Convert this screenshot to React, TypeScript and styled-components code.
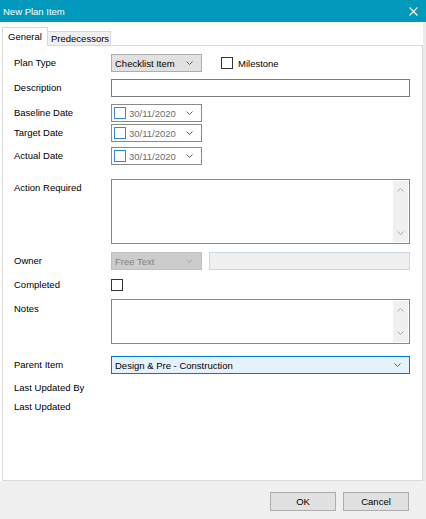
import React from 'react'
import styled, { createGlobalStyle } from 'styled-components'

const GlobalStyle = createGlobalStyle`
  html, body {
    margin: 0;
    padding: 0;
    background: #ffffff;
  }
  * {
    box-sizing: border-box;
  }
`

const Window = styled.div`
  width: 426px;
  height: 519px;
  display: flex;
  flex-direction: column;
  background: #ffffff;
  font-family: 'Liberation Sans', Arial, sans-serif;
  font-size: 9.5px;
  color: #000;
  overflow: hidden;
`

const TitleBar = styled.div`
  height: 22px;
  flex-shrink: 0;
  background: #0099bc;
  color: #fff;
  display: flex;
  align-items: center;
  justify-content: space-between;
  padding: 0 8px 0 3px;
  font-size: 9.5px;
`

const Content = styled.div`
  flex: 1;
  display: flex;
  flex-direction: column;
  padding: 5px 0 0 2px;
  border-right: 3px solid #ebebeb;
`

const TabStrip = styled.div`
  display: flex;
  align-items: flex-end;
  height: 19px;
  margin-bottom: -1px;
  position: relative;
  z-index: 1;
`

const Tab = styled.div<{ $active?: boolean; $width: number }>`
  width: ${p => p.$width}px;
  height: ${p => (p.$active ? 19 : 15)}px;
  background: ${p => (p.$active ? '#ffffff' : '#f0f0f0')};
  border: 1px solid #d9d9d9;
  border-bottom: ${p => (p.$active ? 'none' : '1px solid #d9d9d9')};
  border-left: ${p => (p.$active ? '1px solid #d9d9d9' : 'none')};
  display: flex;
  align-items: ${p => (p.$active ? 'flex-start' : 'center')};
  padding: ${p => (p.$active ? '3px 0 0 5px' : '0 0 0 3px')};
`

const Panel = styled.div`
  flex: 1;
  border: 1px solid #d9d9d9;
  background: #fff;
  padding: 0 0 0 11px;
  display: flex;
  flex-direction: column;
`

const Row = styled.div<{ $top: number; $align?: 'center' | 'start' }>`
  display: grid;
  grid-template-columns: 97px auto;
  align-items: ${p => (p.$align === 'start' ? 'start' : 'center')};
  margin-top: ${p => p.$top}px;
`

const Label = styled.div<{ $pad?: number }>`
  line-height: 12px;
  padding-top: ${p => p.$pad ?? 0}px;
  white-space: nowrap;
`

const Controls = styled.div`
  display: flex;
  align-items: center;
`

const Select = styled.div<{ $width: number; $variant?: 'normal' | 'disabled' | 'focused' }>`
  width: ${p => p.$width}px;
  height: 18px;
  display: flex;
  align-items: center;
  justify-content: space-between;
  padding: 0 8px 0 3px;
  background: ${p =>
    p.$variant === 'disabled' ? '#cccccc' : p.$variant === 'focused' ? '#e5f1fb' : '#e1e1e1'};
  border: 1px solid
    ${p => (p.$variant === 'disabled' ? '#bfbfbf' : p.$variant === 'focused' ? '#0078d7' : '#adadad')};
  color: ${p => (p.$variant === 'disabled' ? '#838383' : '#000')};
`

const TextInput = styled.div<{ $width: number; $disabled?: boolean }>`
  width: ${p => p.$width}px;
  height: 18px;
  background: ${p => (p.$disabled ? '#f0f0f0' : '#fff')};
  border: 1px solid ${p => (p.$disabled ? '#c9d6e8' : '#7a7a7a')};
  margin-left: ${p => (p.$disabled ? 7 : 0)}px;
`

const DateBox = styled.div`
  width: 91px;
  height: 18px;
  display: flex;
  align-items: center;
  padding: 0 8px 0 2px;
  border: 1px solid #8a8a8a;
  background: #fff;
  color: #6d6d6d;
`

const DateCheck = styled.span`
  width: 12px;
  height: 12px;
  border: 1px solid #3a86d4;
  background: #fff;
  margin-right: 3px;
  flex-shrink: 0;
`

const DateText = styled.span`
  flex: 1;
`

const CheckBox = styled.span<{ $gap?: number }>`
  width: 12px;
  height: 12px;
  border: 1px solid #333333;
  background: #fff;
  margin-left: ${p => p.$gap ?? 0}px;
  margin-right: 5px;
  flex-shrink: 0;
`

const TextArea = styled.div<{ $height: number }>`
  width: 299px;
  height: ${p => p.$height}px;
  border: 1px solid #828790;
  background: #fff;
  display: flex;
  justify-content: flex-end;
  padding: 1px;
`

const ScrollBar = styled.div`
  width: 15px;
  background: #f0f0f0;
  display: flex;
  flex-direction: column;
  justify-content: space-between;
  align-items: center;
  padding: 7px 0;
`

const Footer = styled.div`
  height: 38px;
  flex-shrink: 0;
  background: #f0f0f0;
  display: flex;
  justify-content: flex-end;
  align-items: flex-start;
  gap: 7px;
  padding: 11px 17px 0 0;
`

const Button = styled.button`
  width: 66px;
  height: 19px;
  background: #e1e1e1;
  border: 1px solid #adadad;
  font-family: 'Liberation Sans', Arial, sans-serif;
  font-size: 9.5px;
  color: #000;
  padding: 0;
`

const Chevron: React.FC<{ color?: string; up?: boolean }> = ({ color = '#606060', up }) => (
  <svg width="7" height="4" viewBox="0 0 7 4">
    <path
      d={up ? 'M0.5 3.5 L3.5 0.5 L6.5 3.5' : 'M0.5 0.5 L3.5 3.5 L6.5 0.5'}
      fill="none"
      stroke={color}
      strokeWidth="1"
    />
  </svg>
)

const CloseIcon = () => (
  <svg width="9" height="9" viewBox="0 0 9 9">
    <path d="M0.5 0.5 L8.5 8.5 M8.5 0.5 L0.5 8.5" stroke="#fff" strokeWidth="1.1" />
  </svg>
)

const Scroll = () => (
  <ScrollBar>
    <Chevron up color="#a8a8a8" />
    <Chevron color="#a8a8a8" />
  </ScrollBar>
)

const DatePicker: React.FC<{ value: string }> = ({ value }) => (
  <DateBox>
    <DateCheck />
    <DateText>{value}</DateText>
    <Chevron />
  </DateBox>
)

export default function App() {
  return (
    <Window>
      <GlobalStyle />
      <TitleBar>
        <span>New Plan Item</span>
        <CloseIcon />
      </TitleBar>
      <Content>
        <TabStrip>
          <Tab $active $width={46}>General</Tab>
          <Tab $width={63}>Predecessors</Tab>
        </TabStrip>
        <Panel>
          <Row $top={8}>
            <Label>Plan Type</Label>
            <Controls>
              <Select $width={91}>
                <span>Checklist Item</span>
                <Chevron />
              </Select>
              <CheckBox $gap={19} />
              <span>Milestone</span>
            </Controls>
          </Row>
          <Row $top={7}>
            <Label>Description</Label>
            <TextInput $width={299} />
          </Row>
          <Row $top={7}>
            <Label>Baseline Date</Label>
            <DatePicker value="30/11/2020" />
          </Row>
          <Row $top={2}>
            <Label>Target Date</Label>
            <DatePicker value="30/11/2020" />
          </Row>
          <Row $top={5}>
            <Label>Actual Date</Label>
            <DatePicker value="30/11/2020" />
          </Row>
          <Row $top={14} $align="start">
            <Label $pad={3}>Action Required</Label>
            <TextArea $height={65}>
              <Scroll />
            </TextArea>
          </Row>
          <Row $top={8}>
            <Label>Owner</Label>
            <Controls>
              <Select $width={91} $variant="disabled">
                <span>Free Text</span>
                <Chevron color="#a6a6a6" />
              </Select>
              <TextInput $width={201} $disabled />
            </Controls>
          </Row>
          <Row $top={9}>
            <Label>Completed</Label>
            <Controls>
              <CheckBox />
            </Controls>
          </Row>
          <Row $top={8} $align="start">
            <Label $pad={4}>Notes</Label>
            <TextArea $height={45}>
              <Scroll />
            </TextArea>
          </Row>
          <Row $top={12}>
            <Label>Parent Item</Label>
            <Select $width={299} $variant="focused">
              <span>Design &amp; Pre - Construction</span>
              <Chevron />
            </Select>
          </Row>
          <Row $top={8}>
            <Label>Last Updated By</Label>
          </Row>
          <Row $top={7}>
            <Label>Last Updated</Label>
          </Row>
        </Panel>
      </Content>
      <Footer>
        <Button>OK</Button>
        <Button>Cancel</Button>
      </Footer>
    </Window>
  )
}
